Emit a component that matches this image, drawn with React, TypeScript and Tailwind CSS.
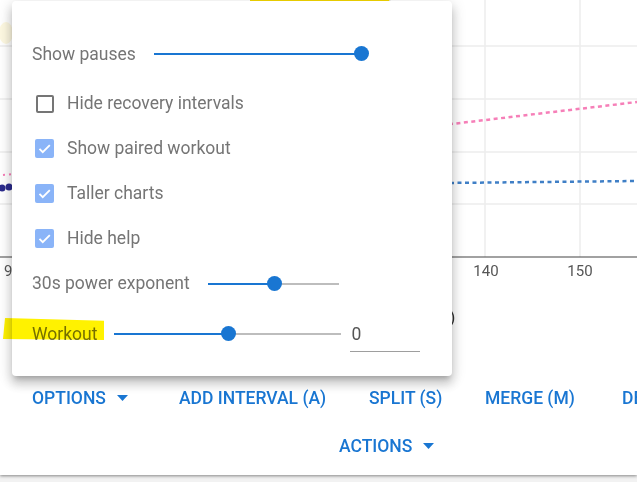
import React from "react";

const BLUE = "#1976d2";

function Slider({ width, value }: { width: number; value: number }) {
  const pos = Math.round(width * value);
  return (
    <div className="relative h-[16px]" style={{ width }}>
      <div className="absolute left-0 right-0 top-[7px] h-[2px] bg-[#bdbdbd]" />
      <div className="absolute left-0 top-[7px] h-[2px] bg-[#1976d2]" style={{ width: pos }} />
      <div
        className="absolute top-[0px] h-[15px] w-[15px] rounded-full bg-[#1976d2]"
        style={{ left: pos - 7 }}
      />
    </div>
  );
}

function Check({ checked, label }: { checked: boolean; label: string }) {
  return (
    <div className="flex h-[45px] items-center">
      <div className="ml-[23px] flex h-[19px] w-[19px] items-center justify-center">
        {checked ? (
          <div className="flex h-[19px] w-[19px] items-center justify-center rounded-[2px] bg-[#8ab4f8]">
            <svg width="15" height="15" viewBox="0 0 24 24">
              <path d="M4 12.5l5.2 5.2L20.5 6.5" fill="none" stroke="white" strokeWidth="3" />
            </svg>
          </div>
        ) : (
          <div className="h-[18px] w-[18px] rounded-[2px] border-2 border-[#757575]" />
        )}
      </div>
      <span className="ml-[13px] text-[17.5px] text-[#757575]">{label}</span>
    </div>
  );
}

function Caret() {
  return (
    <svg width="11" height="6" viewBox="0 0 11 6" className="ml-[11px]">
      <path d="M0 0h11L5.5 6z" fill={BLUE} />
    </svg>
  );
}

export default function App() {
  return (
    <div
      className="relative h-[482px] w-[637px] overflow-hidden bg-[#f2f2f2]"
      style={{ fontFamily: "Roboto, 'Liberation Sans', sans-serif" }}
    >
      {/* card */}
      <div className="relative h-[475px] w-full bg-white shadow-[0_1px_3px_rgba(0,0,0,0.45)]">
        {/* chart behind */}
        <svg className="absolute left-0 top-0" width="637" height="330">
          <line x1="250" y1="0.5" x2="390" y2="0.5" stroke="#f3d600" strokeWidth="2" />
          <ellipse cx="6" cy="33" rx="7" ry="11" fill="#fdf8e1" />
          {[46, 99, 152, 204].map((y) => (
            <line key={y} x1="0" y1={y} x2="637" y2={y} stroke="#ececec" strokeWidth="1.5" />
          ))}
          {[390, 485, 580].map((x) => (
            <line key={x} x1={x} y1="0" x2={x} y2="257" stroke="#ececec" strokeWidth="1.5" />
          ))}
          <line x1="0" y1="257" x2="637" y2="257" stroke="#444" strokeWidth="1.2" />
          <line x1="300" y1="142" x2="637" y2="102" stroke="#f67fb8" strokeWidth="2.5" strokeDasharray="4 3.5" />
          <line x1="300" y1="184.5" x2="637" y2="181" stroke="#3f7fc6" strokeWidth="2.5" strokeDasharray="4 3.5" />
          <line x1="3" y1="175" x2="14" y2="174" stroke="#f67fb8" strokeWidth="2" strokeDasharray="2 4" />
          <circle cx="2" cy="188" r="3.5" fill="#2b2b8c" />
          <circle cx="9" cy="187" r="3.5" fill="#2b2b8c" />
          <text x="4" y="276" fontSize="15" fill="#555">90</text>
          <text x="486" y="276" fontSize="15" fill="#555" textAnchor="middle">140</text>
          <text x="580" y="276" fontSize="15" fill="#555" textAnchor="middle">150</text>
          <text x="449.5" y="323" fontSize="17" fill="#333">)</text>
        </svg>

        {/* action buttons */}
        <div className="absolute left-0 top-[385px] w-full">
          <div className="flex h-[26px] items-center pl-[32px] text-[17.5px] font-medium uppercase text-[#1976d2] whitespace-nowrap">
            <div className="flex w-[147px] shrink-0 items-center">
              OPTIONS
              <Caret />
            </div>
            <div className="w-[190px] shrink-0">ADD INTERVAL (A)</div>
            <div className="w-[116px] shrink-0">SPLIT (S)</div>
            <div className="w-[137px] shrink-0">MERGE (M)</div>
            <div className="shrink-0">DELETE</div>
          </div>
          <div className="mt-[22px] flex h-[26px] items-center pl-[339px] text-[17.5px] font-medium uppercase text-[#1976d2]">
            ACTIONS
            <Caret />
          </div>
        </div>

        {/* popup */}
        <div className="absolute left-[12px] top-[1px] h-[375px] w-[440px] rounded-[4px] bg-white pt-[33px] shadow-[0px_5px_5px_-3px_rgba(0,0,0,0.2),0px_8px_10px_1px_rgba(0,0,0,0.14),0px_3px_14px_2px_rgba(0,0,0,0.12)]">
          <div className="flex h-[40px] items-center pl-[20px]">
            <span className="text-[17.5px] text-[#757575]">Show pauses</span>
            <div className="ml-[18px]">
              <Slider width={207} value={1} />
            </div>
          </div>
          <div className="mt-[7px]">
            <Check checked={false} label="Hide recovery intervals" />
            <Check checked={true} label="Show paired workout" />
            <Check checked={true} label="Taller charts" />
            <Check checked={true} label="Hide help" />
          </div>
          <div className="flex h-[45px] items-center pl-[20px]">
            <span className="text-[17.5px] text-[#757575]">30s power exponent</span>
            <div className="ml-[18px]">
              <Slider width={131} value={0.5} />
            </div>
          </div>
          <div className="mt-[3px] flex h-[50px] items-center pl-[20px]">
            <span className="text-[17.5px] text-[#757575]">Workout</span>
            <div className="ml-[17px]">
              <Slider width={227} value={0.5} />
            </div>
            <div className="ml-[9px] mt-[6px] h-[30px] w-[70px] border-b border-[#9e9e9e] pl-[1px] text-[17.5px] leading-[24px] text-[#555]">
              0
            </div>
          </div>
        </div>

        {/* highlighter annotation */}
        <div className="absolute left-[3px] top-[318px] h-[22px] w-[101px] bg-[#fff200] mix-blend-multiply [clip-path:polygon(2%_0,100%_12%,100%_100%,0_96%)]" />
      </div>
    </div>
  );
}
